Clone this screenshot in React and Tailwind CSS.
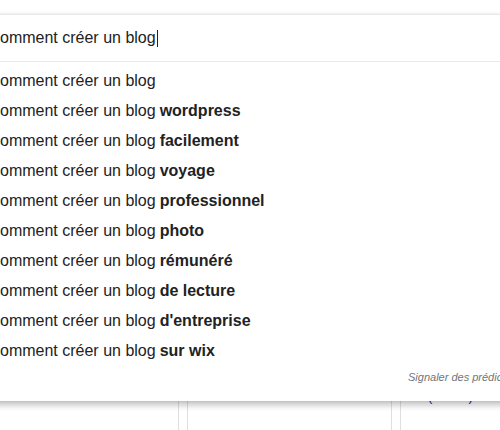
import React from "react";

const suggestions = [
  "",
  "wordpress",
  "facilement",
  "voyage",
  "professionnel",
  "photo",
  "rémunéré",
  "de lecture",
  "d'entreprise",
  "sur wix",
];

export default function App() {
  return (
    <div
      className="relative w-[500px] h-[430px] overflow-hidden bg-white text-[#222]"
      style={{ fontFamily: '"Liberation Sans", Arial, sans-serif' }}
    >
      {/* page content behind the dropdown */}
      <div className="flex h-full pt-[300px]">
        <div className="w-[179px] shrink-0 border-r border-[#dfdfdf]" />
        <div className="ml-[8px] w-[205px] shrink-0 border-x border-[#dfdfdf]" />
        <div className="ml-[8px] flex-1 border-l border-[#dfdfdf] pl-[27px] pt-[84px]">
          <span className="text-[13px] text-[#1a0dab]">( 2019 )</span>
        </div>
      </div>

      {/* autocomplete dropdown */}
      <div className="absolute top-[15px] left-[-20px] right-[-20px] bg-white shadow-[0_4px_6px_rgba(32,33,36,0.28),0_-1px_3px_rgba(32,33,36,0.12)] pb-[15px]">
        <div className="flex h-[46px] items-center pl-[12px] text-[16px]">
          <span>comment créer un blog</span>
          <span className="ml-[1px] h-[17px] w-[1px] bg-[#222]" />
        </div>
        <div className="border-t border-[#e8eaed] pt-[4px]">
          {suggestions.map((s, i) => (
            <div key={i} className="flex h-[30px] items-center pl-[12px] text-[16px]">
              <span>comment créer un blog</span>
              {s && <b className="ml-[4px] font-bold">{s}</b>}
            </div>
          ))}
        </div>
        <div className="flex justify-start pl-[428px] pt-[3px] text-[11px] italic text-[#70757a] whitespace-nowrap">
          Signaler des prédictions inappropriées
        </div>
      </div>
    </div>
  );
}
